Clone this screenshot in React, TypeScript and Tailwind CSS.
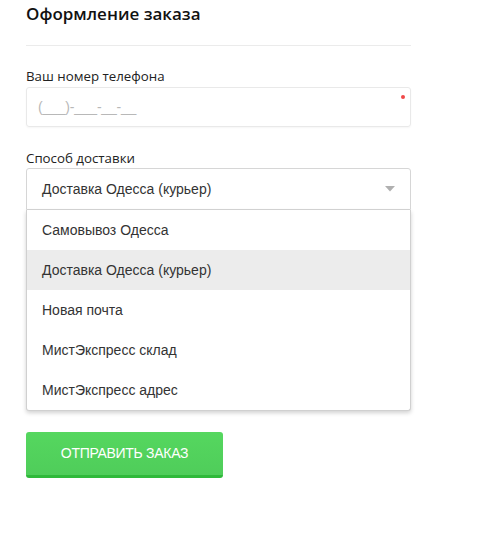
const OPTIONS = [
  "Самовывоз Одесса",
  "Доставка Одесса (курьер)",
  "Новая почта",
  "МистЭкспресс склад",
  "МистЭкспресс адрес",
];

export default function App() {
  const selected = "Доставка Одесса (курьер)";
  return (
    <div className="min-h-[545px] bg-white pl-[26px] pt-[1px]">
      <div className="w-[385px]">
        <h1 className="font-['Open_Sans',sans-serif] text-[17px] leading-[24px] font-semibold text-[#111] pt-[1px]">
          Оформление заказа
        </h1>
        <div className="mt-[19px] h-px bg-[#ebebeb]" />

        <label className="block mt-[20px] font-['Open_Sans',sans-serif] text-[13.3px] leading-[20px] text-[#222]">
          Ваш номер телефона
        </label>
        <div className="relative mt-[1px] h-[40px] rounded-[3px] border border-[#e9e9e9] shadow-[0_1px_2px_rgba(0,0,0,0.04)] flex items-center pl-[11px]">
          <span className="font-['Liberation_Sans',sans-serif] text-[14px] text-[#b8b8b8] tracking-[-0.2px]">
            (___)-___-__-__
          </span>
          <span className="absolute right-[5px] top-[7px] w-[4px] h-[4px] rounded-full bg-[#f04848]" />
        </div>

        <label className="block mt-[21px] font-['Open_Sans',sans-serif] text-[13.3px] leading-[20px] text-[#222]">
          Способ доставки
        </label>
        <div className="relative">
          <div className="h-[42px] rounded-t-[3px] border border-[#d6d6d6] flex items-center justify-between pl-[15px] pr-[15px]">
            <span className="font-['Liberation_Sans',sans-serif] text-[14px] text-[#333]">{selected}</span>
            <svg width="10" height="6" viewBox="0 0 10 6">
              <path d="M0 0h10L5 5.5z" fill="#b0b0b0" />
            </svg>
          </div>
          <ul className="absolute left-0 right-0 top-full bg-white border border-t-0 border-[#d0d0d0] rounded-b-[3px] shadow-[0_2px_4px_rgba(0,0,0,0.18)]">
            {OPTIONS.map((o) => (
              <li
                key={o}
                className={`h-[40px] flex items-center pl-[15px] font-['Liberation_Sans',sans-serif] text-[14px] text-[#333] ${o === selected ? "bg-[#ececec]" : ""}`}
              >
                {o}
              </li>
            ))}
          </ul>
        </div>

        <button className="mt-[222px] w-[197px] h-[46px] rounded-[3px] bg-gradient-to-b from-[#55d75f] to-[#4fcd5a] border-b-[3px] border-[#2fb93a] text-white font-['Liberation_Sans',sans-serif] text-[14px] tracking-[-0.3px] uppercase">
          Отправить заказ
        </button>
      </div>
    </div>
  );
}
